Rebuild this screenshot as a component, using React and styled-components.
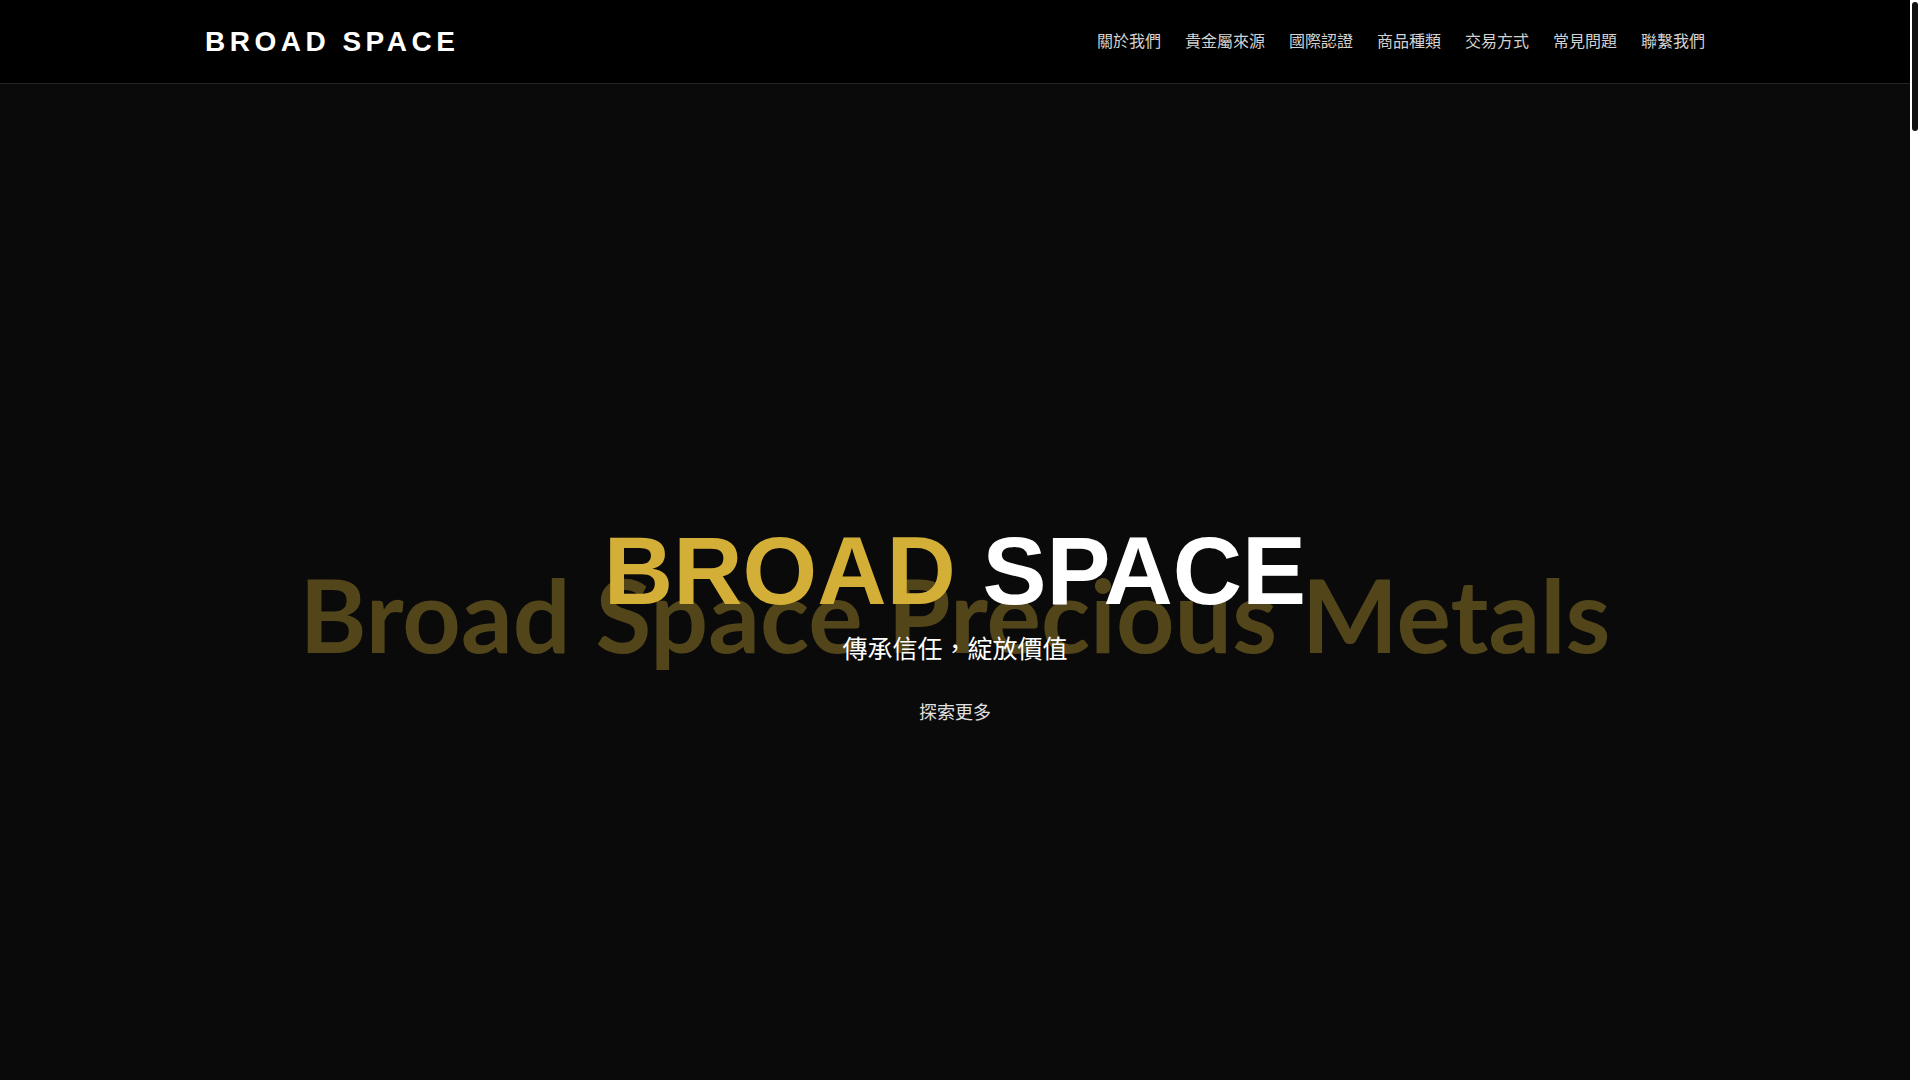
import styled, { createGlobalStyle } from 'styled-components';

const GlobalStyle = createGlobalStyle`
  html, body {
    margin: 0;
    padding: 0;
    background: #0a0a0a;
  }
  body {
    padding-right: 10px;
  }
  * { box-sizing: border-box; }
`;

const navItems = ['關於我們', '貴金屬來源', '國際認證', '商品種類', '交易方式', '常見問題', '聯繫我們'];

export default function App() {
  return (
    <>
      <GlobalStyle />
      <Header>
        <HeaderInner>
          <Logo href="#">BROAD SPACE</Logo>
          <Nav>
            {navItems.map((item) => (
              <NavLink key={item} href={'#' + item}>{item}</NavLink>
            ))}
          </Nav>
        </HeaderInner>
      </Header>

      <Hero>
        <HeroContent>
          <BackText>Broad Space Precious Metals</BackText>
          <Title>
            <Gold>BROAD</Gold> SPACE
          </Title>
          <Subtitle>傳承信任，綻放價值</Subtitle>
          <Explore href="#關於我們">探索更多</Explore>
        </HeroContent>
      </Hero>

      {navItems.map((item) => (
        <Section key={item} id={item}>
          <SectionTitle>{item}</SectionTitle>
        </Section>
      ))}

      <ScrollTrack>
        <ScrollThumb />
      </ScrollTrack>
    </>
  );
}

const Header = styled.header`
  height: 84px;
  background: #000000;
  border-bottom: 1px solid #1f242b;
`;

const HeaderInner = styled.div`
  max-width: 1500px;
  height: 100%;
  margin: 0 auto;
  display: flex;
  align-items: center;
  justify-content: space-between;
`;

const Logo = styled.a`
  font-family: 'Liberation Sans', Arial, sans-serif;
  font-weight: 700;
  font-size: 28px;
  letter-spacing: 4.5px;
  color: #ffffff;
  text-decoration: none;
  line-height: 1;
`;

const Nav = styled.nav`
  display: flex;
  align-items: center;
  gap: 24px;
  margin-bottom: 3px;
`;

const NavLink = styled.a`
  font-family: 'Noto Sans CJK TC', 'Noto Sans', sans-serif;
  font-size: 16px;
  color: #d2d2d2;
  text-decoration: none;
  line-height: 1.5;
`;

const Hero = styled.section`
  height: calc(100vh - 84px);
  background: #0a0a0a;
  display: flex;
  align-items: center;
  justify-content: center;
  padding-top: 84px;
`;

const HeroContent = styled.div`
  position: relative;
  display: flex;
  flex-direction: column;
  align-items: center;
`;

const BackText = styled.div`
  position: absolute;
  top: 40px;
  left: 50%;
  transform: translateX(-50%);
  white-space: nowrap;
  font-family: Lato, 'Open Sans', sans-serif;
  font-weight: 700;
  font-size: 102px;
  line-height: 1;
  color: rgba(212, 175, 55, 0.36);
  pointer-events: none;
  z-index: 0;
`;

const Title = styled.h1`
  position: relative;
  z-index: 1;
  margin: 0;
  font-family: 'Liberation Sans', Arial, sans-serif;
  font-weight: 700;
  font-size: 96px;
  line-height: 1;
  color: #ffffff;
  white-space: nowrap;
`;

const Gold = styled.span`
  color: #d4af37;
`;

const Subtitle = styled.p`
  position: relative;
  z-index: 1;
  margin: 10px 0 0;
  font-family: 'Noto Sans CJK TC', 'Noto Sans', sans-serif;
  font-size: 25px;
  line-height: 1.5;
  color: #ffffff;
`;

const Explore = styled.a`
  position: relative;
  z-index: 1;
  margin-top: 31px;
  font-family: 'Noto Sans CJK TC', 'Noto Sans', sans-serif;
  font-size: 18px;
  line-height: 1.5;
  color: #e0e0e0;
  text-decoration: none;
`;

const Section = styled.section`
  min-height: 1150px;
  background: #0a0a0a;
  display: flex;
  justify-content: center;
  padding-top: 120px;
`;

const SectionTitle = styled.h2`
  margin: 0;
  font-family: 'Noto Sans CJK TC', 'Noto Sans', sans-serif;
  font-size: 36px;
  font-weight: 500;
  color: #d4af37;
`;

const ScrollTrack = styled.div`
  position: fixed;
  top: 0;
  right: 0;
  width: 10px;
  height: 100vh;
  background: #ffffff;
  padding: 2px;
`;

const ScrollThumb = styled.div`
  width: 6px;
  height: 129px;
  background: #111111;
  border-radius: 3px;
`;
